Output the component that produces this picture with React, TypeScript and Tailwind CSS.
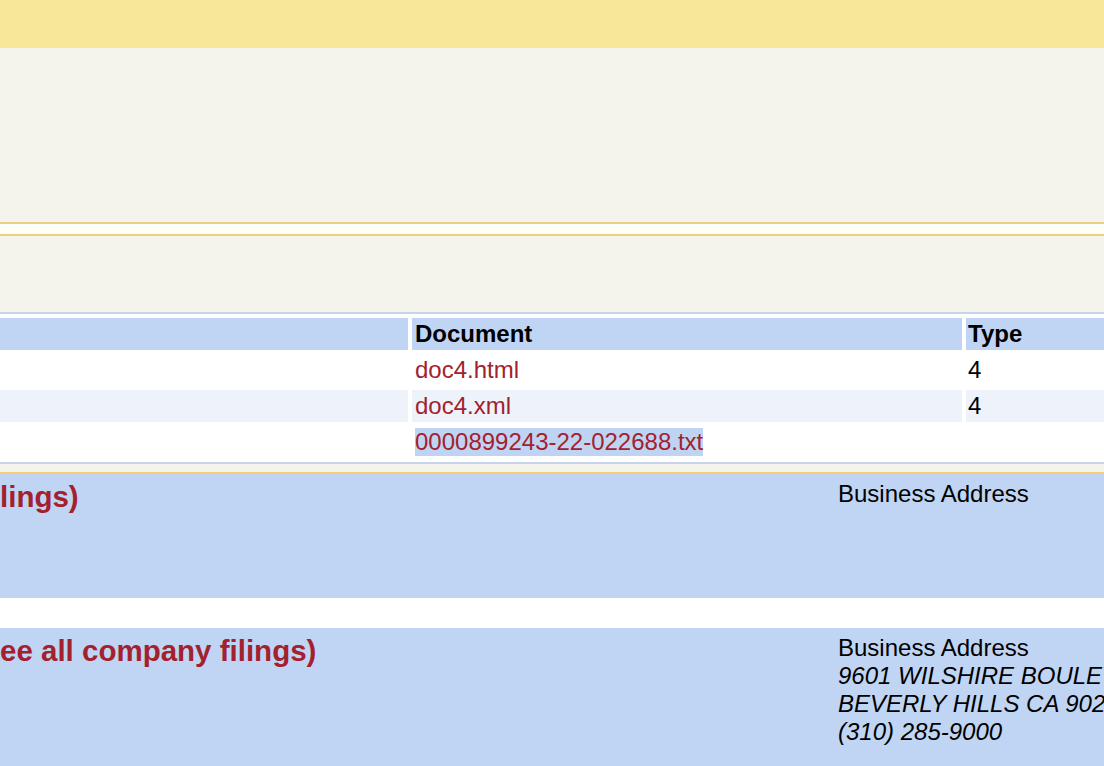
import React from 'react';

const rows = [
  { doc: 'doc4.html', type: '4', bg: 'bg-white', sel: false },
  { doc: 'doc4.xml', type: '4', bg: 'bg-[#eef3fb]', sel: false },
  { doc: '0000899243-22-022688.txt', type: '', bg: 'bg-white', sel: true },
];

export default function App() {
  return (
    <div className="w-[1104px] h-[766px] overflow-hidden bg-white text-black font-['Liberation_Sans',Arial,sans-serif] text-[24px] leading-[28px]">
      {/* Header band */}
      <div className="h-[48px] bg-[#f8e799]" />
      <div className="h-[174px] bg-[#f5f4ec]" />
      <div className="h-[2px] bg-[#edd07e]" />
      <div className="h-[10px] bg-[#fffef8]" />
      <div className="h-[2px] bg-[#edd07e]" />
      <div className="h-[76px] bg-[#f5f4ec]" />

      {/* Document format files */}
      <div className="border-y-2 border-[#c7d5ea] bg-white">
        <div className="grid grid-cols-[408px_550px_1fr] gap-[4px] py-[4px] whitespace-nowrap">
          <div className="h-[32px] bg-[#c0d5f3]" />
          <div className="h-[32px] bg-[#c0d5f3] px-[3px] flex items-center font-bold">Document</div>
          <div className="h-[32px] bg-[#c0d5f3] px-[2px] flex items-center font-bold">Type</div>
          {rows.map((r) => (
            <React.Fragment key={r.doc}>
              <div className={`h-[32px] ${r.bg}`} />
              <div className={`h-[32px] ${r.bg} px-[3px] flex items-center`}>
                <a href="#" className={`text-[#a3212f] ${r.sel ? 'bg-[#bfd4f2]' : ''}`}>{r.doc}</a>
              </div>
              <div className={`h-[32px] ${r.type ? r.bg : 'bg-white'} px-[2px] flex items-center`}>{r.type}</div>
            </React.Fragment>
          ))}
        </div>
      </div>
      <div className="h-[8px] bg-[#f5f4ec]" />
      <div className="h-[2px] bg-[#f1cf72]" />

      {/* Filer blocks */}
      <div className="h-[124px] bg-[#c0d5f3] pt-[6px] flex whitespace-nowrap">
        <div className="w-[838px] shrink-0 font-bold text-[29.5px] leading-[33px] text-[#a3212f]">lings)</div>
        <div className="shrink-0">Business Address</div>
      </div>
      <div className="h-[30px] bg-white" />
      <div className="h-[140px] bg-[#c0d5f3] pt-[6px] flex whitespace-nowrap">
        <div className="w-[838px] shrink-0 font-bold text-[29.5px] leading-[33px] text-[#a3212f]">ee all company filings)</div>
        <div className="shrink-0">
          <div>Business Address</div>
          <div className="italic">9601 WILSHIRE BOULEVARD</div>
          <div className="italic">BEVERLY HILLS CA 90210</div>
          <div className="italic">(310) 285-9000</div>
        </div>
      </div>
    </div>
  );
}
